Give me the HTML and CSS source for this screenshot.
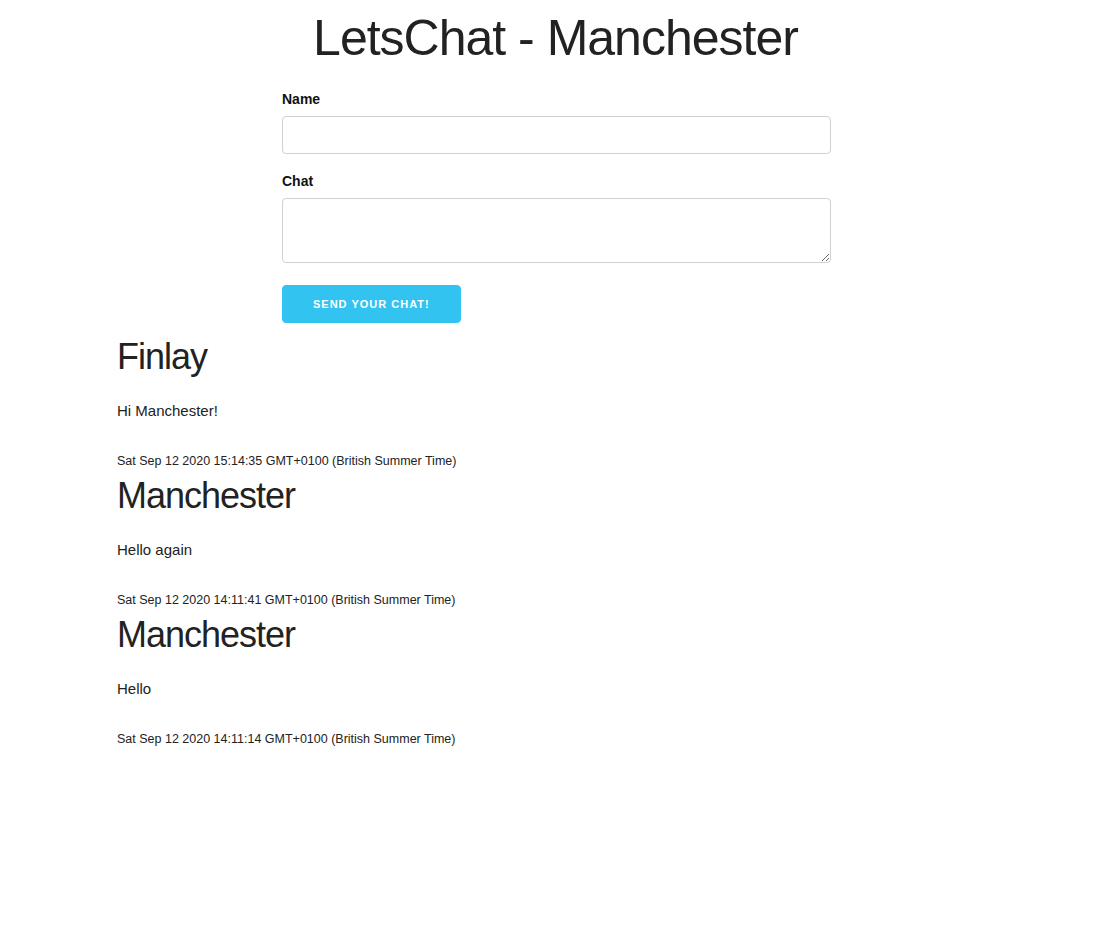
FILE: index.html
```html
<!DOCTYPE html>
<html lang="en">
<head>
<meta charset="utf-8">
<title>LetsChat - Manchester</title>
<link rel="stylesheet" href="styles.css">
</head>
<body>
<h1 class="title">LetsChat - Manchester</h1>
<form class="chat-form">
  <label class="field-label" for="name">Name</label>
  <input class="field-input" id="name" type="text">
  <label class="field-label" for="chat">Chat</label>
  <textarea class="field-textarea" id="chat"></textarea>
  <button class="send-btn" type="button">Send your chat!</button>
</form>
<div class="messages">
  <div class="message">
    <h3 class="msg-name">Finlay</h3>
    <p class="msg-text">Hi Manchester!</p>
    <div class="msg-time">Sat Sep 12 2020 15:14:35 GMT+0100 (British Summer Time)</div>
  </div>
  <div class="message">
    <h3 class="msg-name">Manchester</h3>
    <p class="msg-text">Hello again</p>
    <div class="msg-time">Sat Sep 12 2020 14:11:41 GMT+0100 (British Summer Time)</div>
  </div>
  <div class="message">
    <h3 class="msg-name">Manchester</h3>
    <p class="msg-text">Hello</p>
    <div class="msg-time">Sat Sep 12 2020 14:11:14 GMT+0100 (British Summer Time)</div>
  </div>
</div>
</body>
</html>
```
FILE: styles.css
```css
body {
  margin: 8px;
  font-family: "Liberation Sans", Arial, sans-serif;
  font-size: 15px;
  line-height: 1.6;
  color: #222;
  background: #fff;
}
.title {
  margin: 0 0 19px;
  font-size: 50px;
  line-height: 1.2;
  font-weight: 400;
  letter-spacing: -1px;
  text-align: center;
}
.chat-form {
  margin: 0 0 0 274px;
  width: 549px;
}
.field-label {
  display: block;
  font-weight: 700;
  font-size: 14px;
  line-height: 24px;
  margin-bottom: 5px;
  color: #111;
}
.field-input,
.field-textarea {
  display: block;
  box-sizing: border-box;
  width: 100%;
  border: 1px solid #d1d1d1;
  border-radius: 4px;
  background: #fff;
  padding: 6px 10px;
  font: inherit;
  margin: 0;
}
.field-input {
  height: 38px;
  margin-bottom: 15px;
}
.field-textarea {
  height: 65px;
  min-height: 65px;
  margin-bottom: 22px;
}
.send-btn {
  display: block;
  box-sizing: border-box;
  height: 38px;
  padding: 0 30px;
  border: 1px solid #33c3f0;
  border-radius: 4px;
  background: #33c3f0;
  color: #fff;
  font-family: "Liberation Sans", Arial, sans-serif;
  font-size: 11px;
  font-weight: 700;
  letter-spacing: 1px;
  text-transform: uppercase;
  line-height: 36px;
  margin: 0 0 11px;
  cursor: pointer;
}
.messages {
  padding-left: 109px;
}
.msg-name {
  margin: 0 0 18px;
  font-size: 36px;
  line-height: 1.3;
  font-weight: 400;
  letter-spacing: -1px;
  color: #222;
}
.msg-text {
  margin: 0 0 27px;
}
.msg-time {
  font-size: 12.5px;
  line-height: 23.2px;
  color: #222;
}
```
